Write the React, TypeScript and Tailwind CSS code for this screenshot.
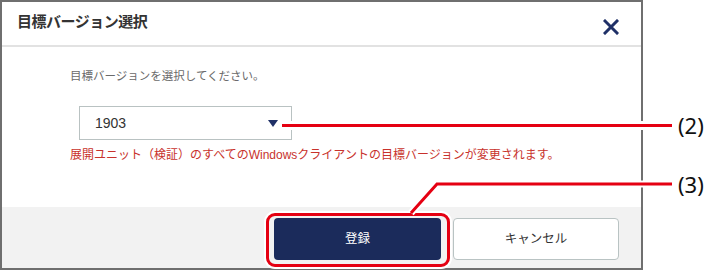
import React from 'react';

const jp = { fontFamily: '"Liberation Sans", "Noto Sans CJK JP", sans-serif' };

function Dialog() {
  return (
    <div className="w-[643px] h-[270px] border-2 border-[#6f6f6f] flex flex-col bg-white" style={jp}>
      <div className="h-[45px] shrink-0 flex items-center justify-between pl-[15px] pr-[22px] border-b-2 border-[#e2e2e2]">
        <div className="text-[15px] font-bold text-[#333] tracking-[-0.5px] -mt-[2px]">目標バージョン選択</div>
        <svg width="16" height="16" viewBox="0 0 16 16" className="mt-[7px]">
          <path d="M2 2 L14 14 M14 2 L2 14" stroke="#1f3067" strokeWidth="3" strokeLinecap="square" fill="none" />
        </svg>
      </div>
      <div className="flex-1 flex flex-col pl-[68px]">
        <div className="mt-[21px] text-[11.5px] leading-[16px] text-[#6a6a6a]">目標バージョンを選択してください。</div>
        <div className="mt-[22px] ml-[9px] w-[213px] h-[34px] border border-[#b9c2c2] flex items-center justify-between pl-[15px] pr-[13px]">
          <span className="text-[14px] text-[#333]">1903</span>
          <svg width="10" height="7" viewBox="0 0 10 7"><path d="M0 0 H10 L5 7 Z" fill="#1f3067" /></svg>
        </div>
        <div className="mt-[7px] text-[12px] leading-[16px] text-[#c8322c]">展開ユニット（検証）のすべてのWindowsクライアントの目標バージョンが変更されます。</div>
      </div>
      <div className="h-[61px] shrink-0 bg-[#f2f2f2] flex items-start justify-end gap-[12px] pt-[11px] pr-[22px]">
        <button className="w-[167px] h-[42px] rounded-[4px] bg-[#1b2b5b] text-white text-[12.5px]">登録</button>
        <button className="w-[166px] h-[42px] rounded-[4px] bg-white border border-[#b9c3c3] text-[#333] text-[12.5px]">キャンセル</button>
      </div>
    </div>
  );
}

export default function App() {
  return (
    <div className="relative w-[710px] h-[272px] bg-white overflow-hidden">
      <Dialog />
      {/* callout (2) */}
      <div className="absolute left-[282px] top-[121px] w-[390px] h-[9px] border-y-[3px] border-white bg-[#e50012]" />
      <div className="absolute left-[678px] top-[110px] text-[22px] leading-[30px] text-[#111]" style={{ fontFamily: '"Noto Sans", sans-serif' }}>(2)</div>
      {/* callout (3) */}
      <div className="absolute left-[264px] top-[211px] w-[188px] h-[58px] rounded-[11px] border-2 border-white" />
      <div className="absolute left-[266px] top-[213px] w-[184px] h-[54px] rounded-[9px] border-[3px] border-[#e50012]" />
      <svg className="absolute left-0 top-0" width="710" height="272">
        <path d="M411 213 L437 184 H672" stroke="#fff" strokeWidth="7" fill="none" />
        <path d="M411 213 L437 184 H672" stroke="#e50012" strokeWidth="3" fill="none" />
      </svg>
      <div className="absolute left-[678px] top-[169px] text-[22px] leading-[30px] text-[#111]" style={{ fontFamily: '"Noto Sans", sans-serif' }}>(3)</div>
    </div>
  );
}
